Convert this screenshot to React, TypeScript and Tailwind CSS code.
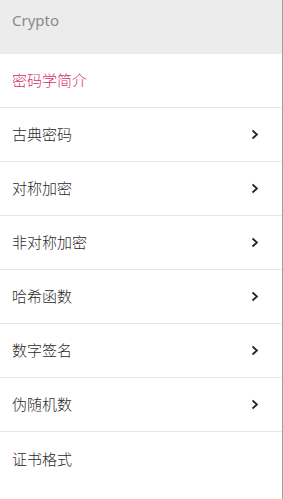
import React from 'react';

const items: { label: string; active?: boolean; arrow?: boolean }[] = [
  { label: '密码学简介', active: true },
  { label: '古典密码', arrow: true },
  { label: '对称加密', arrow: true },
  { label: '非对称加密', arrow: true },
  { label: '哈希函数', arrow: true },
  { label: '数字签名', arrow: true },
  { label: '伪随机数', arrow: true },
  { label: '证书格式' },
];

const Chevron = () => (
  <svg width="8" height="11" viewBox="0 0 8 11" className="shrink-0">
    <path d="M1.5 1.5 L6 5.5 L1.5 9.5" fill="none" stroke="#222" strokeWidth="1.7" />
  </svg>
);

const App: React.FC = () => {
  return (
    <div
      className="w-[283px] h-[499px] bg-white border-r border-[#a0a0a0] overflow-hidden font-light"
      style={{ fontFamily: '"Noto Sans", "Noto Sans CJK SC", sans-serif' }}
    >
      <div className="h-[54px] bg-[#ececec] px-3 pt-[8px] text-[15px] leading-[24px] font-normal text-[#8a8a8a]">
        Crypto
      </div>
      {items.map((item, i) => (
        <div
          key={item.label}
          className={`h-[54px] flex items-center justify-between pl-3 pr-[23px] text-[15px] ${
            i < items.length - 1 ? 'border-b border-[#e6e6e6]' : ''
          } ${item.active ? 'text-[#d4306a]' : 'text-[#2a2a2a]'}`}
        >
          <span>{item.label}</span>
          {item.arrow && <Chevron />}
        </div>
      ))}
    </div>
  );
};

export default App;
